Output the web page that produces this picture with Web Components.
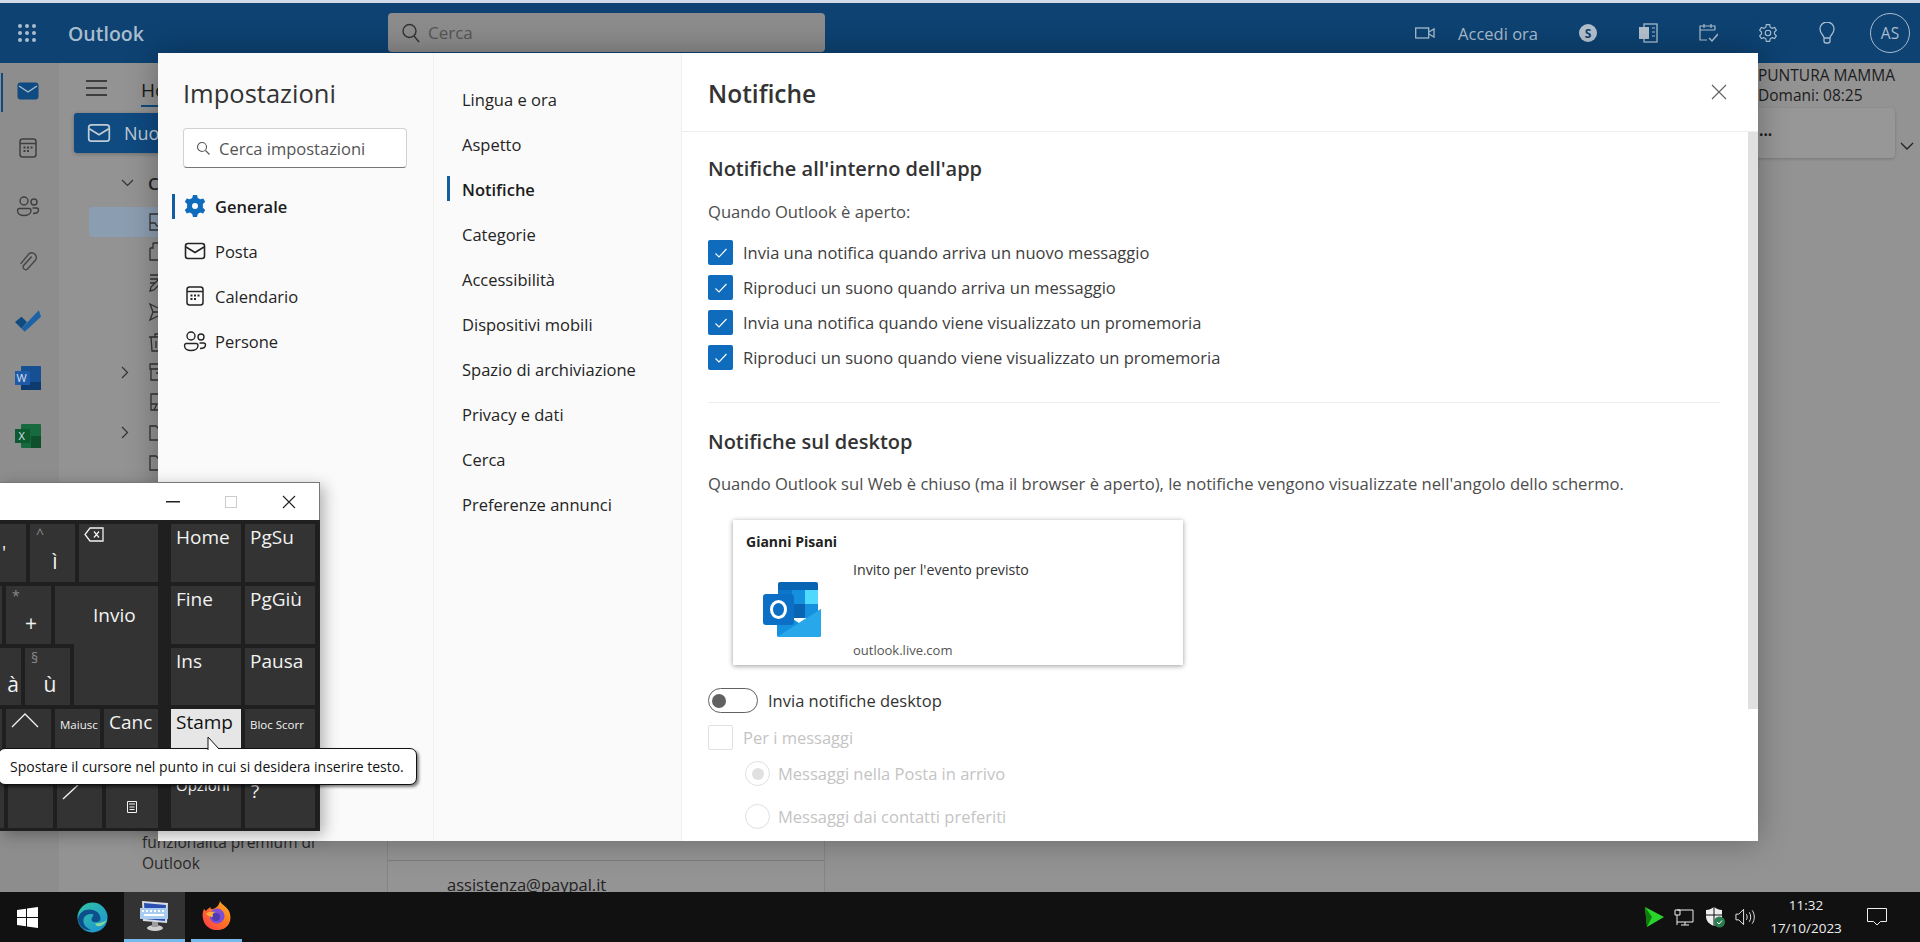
<!DOCTYPE html>
<html lang="it">
<head>
<meta charset="utf-8">
<title>Outlook - Impostazioni</title>
<style>
  html, body { margin: 0; height: 100%; overflow: hidden; }
  body { font-family: "Open Sans", "Liberation Sans", sans-serif; background: #8e8e8e; }
</style>
</head>
<body>
<outlook-desktop>
  <outlook-settings slot="modal"></outlook-settings>
  <screen-keyboard slot="osk"></screen-keyboard>
</outlook-desktop>

<script>
const FONT = '"Open Sans", "Liberation Sans", sans-serif';

const ICONS = {
  mail: '<rect x="2.5" y="4.5" width="19" height="15" rx="2.5" fill="none" stroke="currentColor" stroke-width="1.6"/><path d="M3 8l9 5.5L21 8" fill="none" stroke="currentColor" stroke-width="1.6"/>',
  calendar: '<rect x="4" y="3" width="16" height="18" rx="2.5" fill="none" stroke="currentColor" stroke-width="1.5"/><path d="M4 7.5h16" stroke="currentColor" stroke-width="1.5"/><g fill="currentColor"><rect x="7.5" y="10.5" width="2" height="2"/><rect x="11" y="10.5" width="2" height="2"/><rect x="14.5" y="10.5" width="2" height="2"/><rect x="7.5" y="14" width="2" height="2"/><rect x="11" y="14" width="2" height="2"/></g>',
  people: '<g fill="none" stroke="currentColor" stroke-width="1.4"><circle cx="8" cy="7" r="4"/><circle cx="18" cy="8" r="3"/><path d="M3 14.5h10a2 2 0 012 2c0 3-3 5-7 5s-6.500-2-6.500-5a2 2 0 011.500-2z"/><path d="M16.500 14h4a2 2 0 012 2c0 2-2 3.500-5.500 3.500"/></g>'
};

function icon(name, size, color) {
  return `<svg width="${size}" height="${size}" viewBox="0 0 24 24" style="color:${color};display:block" aria-hidden="true">${ICONS[name]}</svg>`;
}

const CHEV_DOWN = '<svg width="13" height="8" viewBox="0 0 13 8"><path d="M1 1l5.500 5.500L12 1" fill="none" stroke="#333" stroke-width="1.200"/></svg>';
const CHEV_RIGHT = '<svg width="8" height="13" viewBox="0 0 8 13"><path d="M1 1l5.500 5.500L1 12" fill="none" stroke="#333" stroke-width="1.200"/></svg>';

// folder glyphs of the tree, only their left edge shows beside the dialog
const FOLDERS = [
  ['', '<path d="M2 2h16v16H2zM2 11h5l2 3h3l2-3h4"/>', true],
  ['', '<path d="M5 1h5l3 3v5M2 6v12h10M2 6h3V1"/>'],
  ['', '<path d="M2 3h16M2 7h8M2 11h5M2 19l4-1L17 7l-3-3L3 15z"/>'],
  ['', '<path d="M2 2l16 8-16 8 3-8zM5 10h13"/>'],
  ['', '<path d="M1 5h18M7 5V2h6v3M3 5l1 14h12l1-14M8 9v7M12 9v7"/>'],
  ['r', '<path d="M2 2h16v5H2zM3 7v11h14V7M8 11h4"/>'],
  ['', '<path d="M3 2h14v16H3zM3 12h6l-3 6"/>'],
  ['r', '<path d="M2 4h6l2 2h8v12H2z"/>'],
  ['', '<path d="M2 4h6l2 2h8v12H2z"/>']
];

class OutlookDesktop extends HTMLElement {
  connectedCallback() {
    this.attachShadow({ mode: 'open' });
    const rows = FOLDERS.map(([chev, d, sel]) => `
      <div class="row ${sel ? 'sel' : ''}">
        <span class="chev-slot">${chev ? CHEV_RIGHT : ''}</span>
        <svg width="20" height="20" viewBox="0 0 20 20" fill="none" stroke="#333" stroke-width="1.300">${d}</svg>
      </div>`).join('');
    this.shadowRoot.innerHTML = `
      <style>
        :host { display: flex; flex-direction: column; height: 942px; position: relative; overflow: hidden; font-family: ${FONT}; }
        .strip { height: 3px; background: #cfdbe6; flex: none; }
        .main { flex: 1; display: flex; min-height: 0; background: #939393; }
        .rail { width: 59px; flex: none; background: #8d8d8d; display: flex; flex-direction: column; margin-top: 0; position: relative; }
        .rail::before { content: ""; position: absolute; left: 1px; top: 10px; width: 2px; height: 39px; background: #0f4a80; }
        .slot { height: 57.5px; flex: none; width: 56px; display: flex; align-items: center; justify-content: center; }
        .rail .slot:first-child { margin-top: -1px; }
        .pane { width: 328px; flex: none; display: flex; flex-direction: column; position: relative; }
        .toolbar { height: 50px; flex: none; display: flex; align-items: center; padding-left: 27px; gap: 34px; font-size: 19px; color: #1a1a1a; }
        .tab { border-bottom: 2px solid #0f4a80; line-height: 26px; padding-bottom: 2px; margin-top: 8px; }
        .new { margin-left: 15px; height: 40px; flex: none; width: 180px; background: #0f4a80; color: #c0ccd6; border-radius: 3px; display: flex; align-items: center; padding-left: 12px; gap: 12px; font-size: 18px; box-shadow: 0 1px 4px rgba(0,0,0,.25); }
        .tree { flex: 1; padding-top: 15px; font-size: 17px; color: #222; }
        .row { height: 30px; display: flex; align-items: center; padding-left: 59px; }
        .row.head { font-weight: 600; margin-bottom: 9px; }
        .row.sel { margin-left: 30px; padding-left: 29px; background: #8b9db0; border-radius: 4px; }
        .chev-slot { width: 30px; flex: none; display: flex; align-items: center; padding-left: 3px; box-sizing: border-box; }
        .promo { position: absolute; left: 83px; bottom: 18px; width: 200px; font-size: 15.500px; line-height: 21px; color: #2a2a2a; }
        .list { width: 438px; flex: none; background: #949494; border-left: 1px solid #858585; border-right: 1px solid #858585; box-sizing: border-box; position: relative; overflow: hidden; }
        .list .line { position: absolute; left: 0; right: 0; top: 797px; height: 1px; background: #7d7d7d; }
        .list .who { position: absolute; left: 59px; bottom: -4px; font-size: 16.500px; color: #222; white-space: nowrap; }
        .rest { flex: 1; min-width: 0; position: relative; }
        .reminder { position: absolute; right: 0; top: 0; width: 162px; padding-top: 2px; color: #1c1c1c; font-size: 15.500px; line-height: 20px; overflow: hidden; height: 170px; }
        .reminder .title { white-space: nowrap; }
        .card { position: absolute; left: -8px; top: 45px; width: 145px; height: 50px; background: #979797; border-radius: 4px; box-shadow: 0 1px 3px rgba(0,0,0,.2); font-weight: 700; padding-left: 9px; line-height: 44px; box-sizing: border-box; }
        .chev { position: absolute; right: 6px; top: 79px; }
        ::slotted([slot="modal"]) { position: absolute; left: 158px; top: 53px; }
        ::slotted([slot="osk"]) { position: absolute; left: 0; top: 482px; }
      </style>
      <div class="strip"></div>
      <app-header></app-header>
      <div class="main">
        <div class="rail">
          <div class="slot"><svg width="22" height="18" viewBox="0 0 22 18"><rect width="21" height="17" x=".5" y=".5" rx="3" fill="#0f4a80"/><path d="M2 4l9 6 9-6" fill="none" stroke="#a9bdce" stroke-width="1.400"/></svg></div>
          <div class="slot">${icon('calendar', 24, '#3f3f3f')}</div>
          <div class="slot">${icon('people', 24, '#3f3f3f')}</div>
          <div class="slot"><svg width="22" height="22" viewBox="0 0 24 24"><path d="M16 5l-9 10a3 3 0 004 4l9-10a5 5 0 00-7-7L4 13" fill="none" stroke="#444" stroke-width="1.500"/></svg></div>
          <div class="slot"><svg width="26" height="22" viewBox="0 0 24 20"><path d="M0 11l6-5 5 5-5 6z" fill="#0f4a80"/><path d="M6 17L22 0l2 6L9 20z" fill="#1c62a6"/></svg></div>
          <div class="slot"><svg width="26" height="24" viewBox="0 0 26 24"><rect x="6" y="0" width="20" height="24" rx="1" fill="#174f93"/><rect x="6" y="16" width="20" height="8" fill="#0f3a70"/><rect x="0" y="5" width="15" height="14" fill="#1f5aa8"/><text x="1.500" y="16" font-size="11" fill="#d9e2ee" font-family="Open Sans">W</text></svg></div>
          <div class="slot"><svg width="26" height="24" viewBox="0 0 26 24"><rect x="6" y="0" width="20" height="24" rx="1" fill="#176a3d"/><rect x="16" y="12" width="10" height="12" fill="#0f4f2c"/><rect x="0" y="5" width="15" height="14" fill="#0d5a30"/><text x="3.500" y="16" font-size="11" fill="#d9e2ee" font-family="Open Sans">X</text></svg></div>
        </div>
        <div class="pane">
          <div class="toolbar">
            <svg width="21" height="16" viewBox="0 0 21 16"><path d="M0 1h21M0 8h21M0 15h21" stroke="#222" stroke-width="1.500"/></svg>
            <span class="tab">Home</span>
          </div>
          <div class="new">${icon('mail', 26, '#c0ccd6')}<span>Nuovo</span></div>
          <div class="tree">
            <div class="row head"><span class="chev-slot">${CHEV_DOWN}</span><span>Cartelle</span></div>
            ${rows}
          </div>
          <div class="promo">funzionalità premium di Outlook</div>
        </div>
        <div class="list"><div class="line"></div><div class="who">assistenza@paypal.it</div></div>
        <div class="rest">
          <div class="reminder">
            <div class="title">PUNTURA MAMMA</div>
            <div>Domani: 08:25</div>
            <div class="card">...</div>
            <svg class="chev" width="14" height="9" viewBox="0 0 14 9"><path d="M1 1l6 6 6-6" fill="none" stroke="#222" stroke-width="1.300"/></svg>
          </div>
        </div>
      </div>
      <win-taskbar></win-taskbar>
      <slot name="modal"></slot>
      <slot name="osk"></slot>
    `;
  }
}

class AppHeader extends HTMLElement {
  connectedCallback() {
    this.attachShadow({ mode: 'open' });
    const dots = [4, 11, 18].flatMap(y => [4, 11, 18].map(x => `<circle cx="${x}" cy="${y}" r="2"/>`)).join('');
    this.shadowRoot.innerHTML = `
      <style>
        :host { display: flex; align-items: center; height: 60px; flex: none; background: #0d4272; color: #a9bdce; font-family: ${FONT}; position: relative; }
        .waffle { width: 22px; height: 22px; margin-left: 16px; fill: #a9bdce; flex: none; }
        .brand { margin-left: 30px; width: 320px; font-size: 19.500px; font-weight: 600; flex: none; }
        .search { width: 437px; height: 39px; box-sizing: border-box; background: #8c8c8c; border-radius: 4px; display: flex; align-items: center; padding-left: 14px; gap: 8px; color: #555; font-size: 17px; flex: none; align-self: flex-start; margin-top: 10px; }
        .right { margin-left: auto; display: flex; align-items: center; height: 100%; color: #a9bdce; }
        .right svg { display: block; flex: none; }
        .join { font-size: 16.500px; margin: 0 40px 0 23px; white-space: nowrap; }
        .avatar { width: 40px; height: 40px; box-sizing: border-box; border: 1px solid #a9bdce; border-radius: 50%; display: flex; align-items: center; justify-content: center; font-size: 15.500px; margin: 0 10px 0 34px; }
      </style>
      <svg class="waffle" viewBox="0 0 22 22">${dots}</svg>
      <div class="brand">Outlook</div>
      <div class="search">
        <svg width="18" height="20" viewBox="0 0 18 20"><circle cx="7.500" cy="8" r="6.500" fill="none" stroke="#333" stroke-width="1.400"/><path d="M12 13l5 6" stroke="#333" stroke-width="1.400"/></svg>
        <span>Cerca</span>
      </div>
      <div class="right">
        <svg width="20" height="14" viewBox="0 0 20 14"><rect x=".7" y="2" width="13" height="10" fill="none" stroke="currentColor" stroke-width="1.300"/><path d="M14 6l5-3v8l-5-3" fill="none" stroke="currentColor" stroke-width="1.300"/></svg>
        <span class="join">Accedi ora</span>
        <svg width="20" height="20" viewBox="0 0 20 20"><circle cx="10" cy="10" r="9" fill="#b4c1cd"/><text x="10" y="14.500" text-anchor="middle" font-size="12" font-weight="700" fill="#0d4272" font-family="Open Sans">S</text></svg>
        <svg style="margin-left:40px" width="20" height="20" viewBox="0 0 20 20"><rect x="6" y="1" width="13" height="18" fill="none" stroke="currentColor" stroke-width="1.300"/><rect x="1" y="4" width="10" height="12" fill="#b4c1cd"/><path d="M14 5h3M14 9h3M14 13h3" stroke="currentColor"/></svg>
        <svg style="margin-left:40px" width="20" height="22" viewBox="0 0 20 22"><path d="M17 8V4H2v14h7M2 8h15M6 2v4M13 2v4" fill="none" stroke="currentColor" stroke-width="1.200"/><path d="M11 16l3 3 6-7" fill="none" stroke="currentColor" stroke-width="1.500"/></svg>
        <svg style="margin-left:40px" width="20" height="20" viewBox="0 0 24 24"><path d="M10 2h4l.7 3 2.300 1.300 3-1 2 3.400-2.200 2.100v2.400l2.200 2.100-2 3.400-3-1L14.700 19 14 22h-4l-.7-3L7 17.700l-3 1-2-3.400 2.200-2.100v-2.400L2 8.700l2-3.400 3 1L9.300 5z" fill="none" stroke="currentColor" stroke-width="1.400"/><circle cx="12" cy="12" r="3.300" fill="none" stroke="currentColor" stroke-width="1.400"/></svg>
        <svg style="margin-left:40px" width="18" height="22" viewBox="0 0 18 22"><path d="M6 16c0-3-4-4-4-9a7 7 0 0114 0c0 5-4 6-4 9zM6 16v3a2 2 0 002 2h2a2 2 0 002-2v-3" fill="none" stroke="currentColor" stroke-width="1.300"/></svg>
        <span class="avatar">AS</span>
      </div>
    `;
  }
}

class OutlookSettings extends HTMLElement {
  connectedCallback() {
    this.attachShadow({ mode: 'open' });
    const subs = ['Lingua e ora', 'Aspetto', 'Notifiche', 'Categorie', 'Accessibilità', 'Dispositivi mobili', 'Spazio di archiviazione', 'Privacy e dati', 'Cerca', 'Preferenze annunci'];
    this.shadowRoot.innerHTML = `
      <style>
        :host { display: flex; width: 1600px; height: 788px; background: #fff; color: #242424; font-family: ${FONT}; box-shadow: 0 0 30px rgba(0,0,0,.3); font-size: 16.500px; }
        .nav { width: 275px; flex: none; background: #fafafa; box-sizing: border-box; padding: 22px 24px 0 25px; }
        h1 { margin: 0; font-size: 25.500px; font-weight: 400; line-height: 36px; color: #333; }
        .find { margin-top: 17px; height: 40px; width: 224px; box-sizing: border-box; border: 1px solid #d1d1d1; border-bottom-color: #777; border-radius: 4px; background: #fff; display: flex; align-items: center; gap: 8px; padding-left: 12px; color: #555; }
        .cats { list-style: none; margin: 15.500px 0 0 -11px; padding: 0; }
        .cats li { height: 45px; display: flex; align-items: center; gap: 8px; padding-left: 11px; position: relative; }
        .cats svg { flex: none; }
        .on { font-weight: 600; color: #1c1c1c; }
        .on::before { content: ""; position: absolute; left: 0; top: 10px; width: 3px; height: 25px; background: #115ea3; }
        .subs { width: 249px; flex: none; background: #fafafa; border-left: 1px solid #f0f0f0; box-sizing: border-box; list-style: none; margin: 0; padding: 24px 0 0 0; border-right: 1px solid #f0f0f0; }
        .subs li { height: 45px; display: flex; align-items: center; padding-left: 28px; position: relative; white-space: nowrap; }
        .subs li.on::before { left: 13px; top: 9px; }
        .content { flex: 1; min-width: 0; display: flex; flex-direction: column; }
        .head { height: 79px; flex: none; border-bottom: 1px solid #ededed; display: flex; align-items: center; justify-content: space-between; padding: 0 31px 0 26px; box-sizing: border-box; }
        h2 { margin: 0; font-size: 24.500px; font-weight: 600; color: #333; position: relative; top: 1px; }
        .close { display: block; }
        .scroll { flex: 1; min-height: 0; display: flex; }
        .body { flex: 1; min-width: 0; padding: 22px 24px 0 26px; box-sizing: border-box; overflow: hidden; }
        .bar { width: 10px; flex: none; background: #fff; }
        .bar i { display: block; height: 577px; background: #e0e0e0; }
        h3 { margin: 0; font-size: 20px; font-weight: 600; line-height: 30px; color: #333; }
        p { margin: 0; color: #4d4d4d; line-height: 24px; font-size: 16.600px; }
        .intro { margin-top: 15.500px; margin-bottom: 11.500px; }
        hr { border: 0; border-top: 1px solid #ededed; margin: 27px 4px 0 0; }
        .desk { margin-top: 23.500px; }
        .desk p { margin-top: 15.500px; }
        notif-preview { margin: 23.500px 0 0 25px; }
        .toggle-row { display: flex; align-items: center; gap: 10px; height: 36px; margin-top: 18px; color: #333; }
        .toggle { width: 50px; height: 25px; box-sizing: border-box; border: 1px solid #616161; border-radius: 13px; display: flex; align-items: center; padding-left: 3px; }
        .toggle i { width: 14px; height: 14px; border-radius: 50%; background: #616161; }
        .per { margin-top: 1.500px; }
        .radios { margin-left: 37px; margin-top: -3px; }
      </style>
      <div class="nav">
        <h1>Impostazioni</h1>
        <div class="find">
          <svg width="15" height="15" viewBox="0 0 15 15"><circle cx="6" cy="6" r="4.500" fill="none" stroke="#555" stroke-width="1.100"/><path d="M9.500 9.500l4 4" stroke="#555" stroke-width="1.100"/></svg>
          <span>Cerca impostazioni</span>
        </div>
        <ul class="cats">
          <li class="on"><svg width="24" height="24" viewBox="0 0 24 24"><path fill="#0f6cbd" fill-rule="evenodd" d="M10 1h4l.8 3 2.400 1.300 3-.9 2 3.400-2.300 2.200v3.800l2.300 2.200-2 3.400-3-.9L14.800 20l-.8 3h-4l-.8-3-2.400-1.500-3 .9-2-3.400 2.300-2.200v-3.800L1.800 7.800l2-3.400 3 .9L9.200 4zM12 9a3 3 0 100 6 3 3 0 000-6z"/></svg>Generale</li>
          <li>${icon('mail', 24, '#242424')}Posta</li>
          <li>${icon('calendar', 24, '#242424')}Calendario</li>
          <li>${icon('people', 24, '#242424')}Persone</li>
        </ul>
      </div>
      <ul class="subs">${subs.map(s => `<li class="${s === 'Notifiche' ? 'on' : ''}">${s}</li>`).join('')}</ul>
      <div class="content">
        <div class="head">
          <h2>Notifiche</h2>
          <svg class="close" width="16" height="16" viewBox="0 0 16 16"><path d="M1 1l14 14M15 1L1 15" stroke="#616161" stroke-width="1.100"/></svg>
        </div>
        <div class="scroll">
          <div class="body">
            <h3>Notifiche all'interno dell'app</h3>
            <p class="intro">Quando Outlook è aperto:</p>
            <check-row checked>Invia una notifica quando arriva un nuovo messaggio</check-row>
            <check-row checked>Riproduci un suono quando arriva un messaggio</check-row>
            <check-row checked>Invia una notifica quando viene visualizzato un promemoria</check-row>
            <check-row checked>Riproduci un suono quando viene visualizzato un promemoria</check-row>
            <hr>
            <div class="desk">
              <h3>Notifiche sul desktop</h3>
              <p>Quando Outlook sul Web è chiuso (ma il browser è aperto), le notifiche vengono visualizzate nell'angolo dello schermo.</p>
            </div>
            <notif-preview></notif-preview>
            <div class="toggle-row"><span class="toggle"><i></i></span>Invia notifiche desktop</div>
            <check-row class="per" disabled>Per i messaggi</check-row>
            <div class="radios">
              <check-row disabled radio checked>Messaggi nella Posta in arrivo</check-row>
              <check-row disabled radio>Messaggi dai contatti preferiti</check-row>
            </div>
          </div>
          <div class="bar"><i></i></div>
        </div>
      </div>
    `;
  }
}

class CheckRow extends HTMLElement {
  connectedCallback() {
    this.attachShadow({ mode: 'open' });
    const radio = this.hasAttribute('radio');
    const disabled = this.hasAttribute('disabled');
    const checked = this.hasAttribute('checked');
    let mark;
    if (radio) mark = `<span class="radio">${checked ? '<i></i>' : ''}</span>`;
    else if (checked) mark = `<span class="box on"><svg width="14" height="14" viewBox="0 0 14 14"><path d="M1.500 7.500l3.500 3.500 7.500-8" fill="none" stroke="#fff" stroke-width="1.100"/></svg></span>`;
    else mark = `<span class="box"></span>`;
    this.shadowRoot.innerHTML = `
      <style>
        :host { display: flex; align-items: center; gap: 10px; height: 35px; color: ${disabled ? '#c4c4c4' : '#3d3d3d'}; white-space: nowrap; }
        :host([radio]) { height: 43px; gap: 8px; }
        .box { width: 25px; height: 25px; box-sizing: border-box; border-radius: 2px; border: 1px solid #e0e0e0; display: flex; align-items: center; justify-content: center; flex: none; }
        .box.on { background: #0f6cbd; border: 0; }
        .radio { width: 25px; height: 25px; box-sizing: border-box; border-radius: 50%; border: 1px solid #e0e0e0; display: flex; align-items: center; justify-content: center; flex: none; }
        .radio i { width: 12px; height: 12px; border-radius: 50%; background: #e0e0e0; }
      </style>
      ${mark}<slot></slot>
    `;
  }
}

class NotifPreview extends HTMLElement {
  connectedCallback() {
    this.attachShadow({ mode: 'open' });
    this.shadowRoot.innerHTML = `
      <style>
        :host { display: block; width: 450px; height: 145px; box-sizing: border-box; background: #fff; box-shadow: 0 1px 5px rgba(0,0,0,.4); padding: 12px 13px 0; position: relative; font-family: ${FONT}; }
        .name { font-size: 14px; font-weight: 700; color: #222; line-height: 20px; }
        .grid { display: flex; }
        .logo { width: 107px; flex: none; padding: 30px 0 0 17px; box-sizing: border-box; }
        .txt { display: flex; flex-direction: column; justify-content: space-between; height: 107px; font-size: 14.200px; color: #333; padding-top: 8px; box-sizing: border-box; }
        .url { color: #555; font-size: 13px; line-height: 18px; }
        .msg { line-height: 20px; }
      </style>
      <div class="name">Gianni Pisani</div>
      <div class="grid">
        <div class="logo">
          <svg width="60" height="56" viewBox="0 0 60 56">
            <rect x="15" y="0" width="40" height="36" rx="2" fill="#0a64b4"/>
            <rect x="15" y="8" width="14" height="14" fill="#0c76cc"/>
            <rect x="29" y="8" width="13" height="14" fill="#1490df"/>
            <rect x="42" y="8" width="13" height="14" fill="#50d9ff"/>
            <rect x="29" y="22" width="13" height="14" fill="#0a64b4"/>
            <rect x="42" y="22" width="13" height="14" fill="#1490df"/>
            <path d="M14 27l22 14 22-14v26a2 2 0 01-2 2H16a2 2 0 01-2-2z" fill="#1490df"/>
            <path d="M14 55l44-28v26a2 2 0 01-2 2z" fill="#28a8ea"/>
            <rect x="0" y="12" width="31" height="31" rx="3" fill="#0b6fc6"/>
            <ellipse cx="15.500" cy="27.500" rx="7" ry="8" fill="none" stroke="#fff" stroke-width="3"/>
          </svg>
        </div>
        <div class="txt">
          <div class="msg">Invito per l'evento previsto</div>
          <div class="url">outlook.live.com</div>
        </div>
      </div>
    `;
  }
}

class OskKey extends HTMLElement {
  connectedCallback() {
    this.attachShadow({ mode: 'open' });
    this.shadowRoot.innerHTML = `
      <style>
        :host { display: block; background: #333; color: #f2f2f2; position: relative; box-sizing: border-box; padding: 0 5px; font-size: 19px; line-height: 26px; white-space: nowrap; overflow: hidden; }
        :host([pressed]) { background: #e6e6e6; color: #111; }
        :host([small]) { font-size: 11.500px; padding-top: 3px; }
        :host([center]) { display: flex; align-items: center; justify-content: center; }
        .top { position: absolute; left: 6px; top: 1px; color: #8a8a8a; font-size: 14px; line-height: 18px; }
        .low { position: absolute; left: 5px; right: 0; bottom: 8px; text-align: center; font-size: 21px; }
      </style>
      ${this.hasAttribute('top') ? `<span class="top">${this.getAttribute('top')}</span>` : ''}
      ${this.hasAttribute('low') ? `<span class="low">${this.getAttribute('low')}</span>` : ''}
      <slot></slot>
    `;
  }
}

class ScreenKeyboard extends HTMLElement {
  connectedCallback() {
    this.attachShadow({ mode: 'open' });
    this.shadowRoot.innerHTML = `
      <style>
        :host { display: block; width: 320px; height: 349px; font-family: ${FONT}; box-shadow: 4px 4px 14px rgba(0,0,0,.3); overflow: visible; }
        .title { height: 38px; background: #fff; border-top: 1px solid #777; border-right: 1px solid #777; box-sizing: border-box; display: flex; align-items: center; justify-content: flex-end; }
        .title span { width: 58px; display: flex; justify-content: center; }
        .keys { height: 311px; box-sizing: border-box; background: #1f1f1f; position: relative; overflow: hidden; border-right: 1px solid #222; }
        /* keys sit on the free canvas of the window, cut off by the screen edge */
        .keys osk-key { position: absolute; }
        .tip { position: absolute; left: -2px; top: 266px; }
      </style>
      <div class="title">
        <span><svg width="14" height="2"><rect width="14" height="1.500" fill="#222"/></svg></span>
        <span><svg width="12" height="12"><rect x=".5" y=".5" width="11" height="11" fill="none" stroke="#ccc"/></svg></span>
        <span style="margin-right:1px"><svg width="14" height="14" viewBox="0 0 14 14"><path d="M1 1l12 12M13 1L1 13" stroke="#222" stroke-width="1.100"/></svg></span>
      </div>
      <div class="keys">
        <osk-key style="left:0;top:4px;width:26px;height:58px;padding:15px 0 0 2px">'</osk-key>
        <osk-key style="left:30px;top:4px;width:45px;height:58px" top="^" low="ì"></osk-key>
        <osk-key style="left:79px;top:4px;width:79px;height:58px"><svg width="20" height="16" viewBox="0 0 20 16" style="margin-top:3px;display:block"><path d="M6 1h13v13H6L1 7.500z" fill="none" stroke="#f2f2f2" stroke-width="1.300"/><path d="M10 4.500l5 6M15 4.500l-5 6" stroke="#f2f2f2" stroke-width="1.200"/></svg></osk-key>
        <osk-key style="left:171px;top:4px;width:70px;height:58px">Home</osk-key>
        <osk-key style="left:245px;top:4px;width:70px;height:58px">PgSu</osk-key>

        <osk-key style="left:0;top:66px;width:2px;height:58px;padding:0"></osk-key>
        <osk-key style="left:6px;top:66px;width:45px;height:58px" top="*" low="+"></osk-key>
        <osk-key style="left:55px;top:66px;width:103px;height:58px;padding:16px 0 0 38px">Invio</osk-key>
        <osk-key style="left:171px;top:66px;width:70px;height:58px">Fine</osk-key>
        <osk-key style="left:245px;top:66px;width:70px;height:58px">PgGiù</osk-key>

        <osk-key style="left:0;top:128px;width:21px;height:57px;padding:0" low="à"></osk-key>
        <osk-key style="left:25px;top:128px;width:45px;height:57px" top="§" low="ù"></osk-key>
        <osk-key style="left:74px;top:124px;width:84px;height:61px"></osk-key>
        <osk-key style="left:171px;top:128px;width:70px;height:57px">Ins</osk-key>
        <osk-key style="left:245px;top:128px;width:70px;height:57px">Pausa</osk-key>

        <osk-key style="left:0;top:189px;width:2px;height:59px;padding:0"></osk-key>
        <osk-key style="left:6px;top:189px;width:45px;height:59px"><svg width="28" height="16" viewBox="0 0 28 16" style="display:block;margin-top:3px"><path d="M1 15L14 2l13 13" fill="none" stroke="#f2f2f2" stroke-width="1.300"/></svg></osk-key>
        <osk-key style="left:55px;top:189px;width:45px;height:59px" small>Maiusc</osk-key>
        <osk-key style="left:104px;top:189px;width:54px;height:59px">Canc</osk-key>
        <osk-key style="left:171px;top:189px;width:70px;height:59px" pressed>Stamp</osk-key>
        <osk-key style="left:245px;top:189px;width:70px;height:59px" small>Bloc Scorr</osk-key>

        <osk-key style="left:0;top:252px;width:4px;height:56px;padding:0"></osk-key>
        <osk-key style="left:8px;top:252px;width:45px;height:56px"></osk-key>
        <osk-key style="left:57px;top:252px;width:45px;height:56px"><svg width="18" height="22" viewBox="0 0 18 22" style="display:block;margin:7px 0 0 0"><path d="M1 20L16 6" stroke="#f2f2f2" stroke-width="1.400"/></svg></osk-key>
        <osk-key style="left:106px;top:252px;width:52px;height:56px" center><svg width="10" height="12" viewBox="0 0 10 12" style="margin-top:14px"><path d="M.5.5h9v11h-9zM2 3h6M2.500 6h5M2.500 8.500h5" fill="none" stroke="#f2f2f2"/></svg></osk-key>
        <osk-key style="left:171px;top:252px;width:70px;height:56px;font-size:15px">Opzioni</osk-key>
        <osk-key style="left:245px;top:252px;width:70px;height:56px;padding-top:6px;padding-left:6px">?</osk-key>
      </div>
      <div class="tip"><osk-tip>Spostare il cursore nel punto in cui si desidera inserire testo.</osk-tip></div>
    `;
  }
}

class OskTip extends HTMLElement {
  connectedCallback() {
    this.attachShadow({ mode: 'open' });
    this.shadowRoot.innerHTML = `
      <style>
        :host { display: block; width: 419px; height: 37px; box-sizing: border-box; background: #fff; border: 1px solid #111; border-radius: 7px; box-shadow: 2px 2px 3px rgba(0,0,0,.5); color: #111; font-size: 14px; line-height: 35px; padding-left: 11px; white-space: nowrap; position: relative; font-family: ${FONT}; }
        svg { position: absolute; left: 208px; top: -12px; }
      </style>
      <svg width="13" height="13" viewBox="0 0 13 13"><path d="M1 0v13h12z" fill="#fff"/><path d="M1 13V0l11 12" fill="none" stroke="#111"/></svg>
      <slot></slot>
    `;
  }
}

class WinTaskbar extends HTMLElement {
  connectedCallback() {
    this.attachShadow({ mode: 'open' });
    this.shadowRoot.innerHTML = `
      <style>
        :host { display: flex; align-items: stretch; height: 50px; flex: none; background: #111; color: #eee; font-family: ${FONT}; }
        .cell { display: flex; align-items: center; justify-content: center; box-sizing: border-box; flex: none; }
        .start { width: 54px; }
        .edge { width: 70px; padding-left: 6px; }
        .osk { width: 61px; background: #333; border-bottom: 3px solid #76b9ed; }
        .fox { width: 51px; margin-left: 6px; border-bottom: 3px solid #76b9ed; }
        .tray { margin-left: auto; display: flex; align-items: center; }
        .clock { text-align: center; font-size: 13.500px; line-height: 23px; margin-left: 6px; width: 90px; }
        .note { margin: 0 33px 0 16px; display: block; }
      </style>
      <div class="cell start"><svg width="21" height="21" viewBox="0 0 21 21"><path fill="#fff" d="M0 3l9-1.300V10H0zM10 1.500L21 0v10H10zM0 11h9v8.300L0 18zM10 11h11v10l-11-1.500z"/></svg></div>
      <div class="cell edge"><svg width="31" height="31" viewBox="0 0 32 32">
        <defs>
          <linearGradient id="e1" x1="0" y1="0" x2="1" y2="1"><stop offset="0" stop-color="#33c6a0"/><stop offset="1" stop-color="#1a8fd8"/></linearGradient>
        </defs>
        <circle cx="16" cy="16" r="15.500" fill="url(#e1)"/>
        <path d="M1 18C2 10 9 7 15 8c7 1 10 6 9 11-4 3-9 2-9-1 0-2 2-3 2-5-6-2-12 2-10 9 1 3 4 6 8 7C8 30 2 25 1 18z" fill="#0d4e8c"/>
        <path d="M19 22c4 0 8-1 11-3l1-2c0 3-4 8-9 8-2 0-3-1-3-3z" fill="#7fdc9a"/>
      </svg></div>
      <div class="cell osk"><svg width="32" height="32" viewBox="0 0 32 32">
        <path d="M3 1l26 2-1 20-24-2z" fill="#d6dde6"/><path d="M5 3l22 2-1 16-20-2z" fill="#2a4fb0"/>
        <rect x="1" y="8" width="28" height="11" fill="#a9cdf0"/>
        <g fill="#fff"><rect x="3" y="10" width="2" height="2"/><rect x="7" y="10" width="2" height="2"/><rect x="11" y="10" width="2" height="2"/><rect x="15" y="10" width="2" height="2"/><rect x="19" y="10" width="2" height="2"/><rect x="23" y="10" width="2" height="2"/><rect x="5" y="14" width="20" height="2"/></g>
        <ellipse cx="16" cy="28" rx="8" ry="3" fill="#cfcfcf"/><rect x="13" y="22" width="6" height="5" fill="#9d9d9d"/>
      </svg></div>
      <div class="cell fox"><svg width="30" height="30" viewBox="0 0 30 30">
        <defs><linearGradient id="f1" x1="0" y1="1" x2="1" y2="0"><stop offset="0" stop-color="#ff3750"/><stop offset=".6" stop-color="#ff7a1f"/><stop offset="1" stop-color="#ffbd2e"/></linearGradient></defs>
        <path d="M18 0c1 3 6 5 9 10 3 7 1 14-4 17-7 4-16 2-20-4C0 18 0 12 2 8l2 2c1-2 3-3 5-4-1 2 0 2 2 2 3-1 6-3 7-8z" fill="url(#f1)"/>
        <circle cx="15" cy="15" r="7.500" fill="#7a4fd6"/><circle cx="14" cy="16" r="4" fill="#4f3bb0"/>
        <path d="M4 13c3-3 7-2 10-2-3 0-4 3-3 5-3 0-5-1-7-3z" fill="#ffb03a"/>
      </svg></div>
      <div class="tray">
        <svg width="20" height="20" viewBox="0 0 20 20"><path d="M1 0l19 10L3 20z" fill="#2bd42b"/><path d="M1 0l2 20 5-10z" fill="#0e7d0e"/></svg>
        <svg style="margin-left:10px" width="20" height="17" viewBox="0 0 20 17"><path d="M3 1h16v12H3M1 1h5v5H1zM3 6v10M11 13v3M7 16h8" fill="none" stroke="#eee"/></svg>
        <svg style="margin-left:11px" width="20" height="22" viewBox="0 0 20 22"><path d="M9 1c3 2 5 3 8 3v6c0 5-3 8-8 10-5-2-8-5-8-10V4c3 0 5-1 8-3z" fill="#eee"/><path d="M9 1v19M1 9h16" stroke="#111"/><circle cx="14.500" cy="16" r="5.500" fill="#2a7d4f"/><path d="M12 16l2 2 3-3.500" stroke="#fff" fill="none"/></svg>
        <svg style="margin-left:10px" width="20" height="20" viewBox="0 0 21 20"><path d="M1 7h3l5-5v16l-5-5H1z" fill="none" stroke="#eee"/><path d="M12 7c1 2 1 4 0 6M15 5c2 3 2 7 0 10M18 3c3 4 3 10 0 14" fill="none" stroke="#eee"/></svg>
        <div class="clock">11:32<br>17/10/2023</div>
        <svg class="note" width="20" height="18" viewBox="0 0 20 18"><path d="M.5.500h19v13h-6l-3.500 3.500-3.500-3.500h-6z" fill="none" stroke="#eee"/></svg>
      </div>
    `;
  }
}

customElements.define('outlook-desktop', OutlookDesktop);
customElements.define('app-header', AppHeader);
customElements.define('outlook-settings', OutlookSettings);
customElements.define('check-row', CheckRow);
customElements.define('notif-preview', NotifPreview);
customElements.define('osk-key', OskKey);
customElements.define('screen-keyboard', ScreenKeyboard);
customElements.define('osk-tip', OskTip);
customElements.define('win-taskbar', WinTaskbar);
</script>
</body>
</html>
